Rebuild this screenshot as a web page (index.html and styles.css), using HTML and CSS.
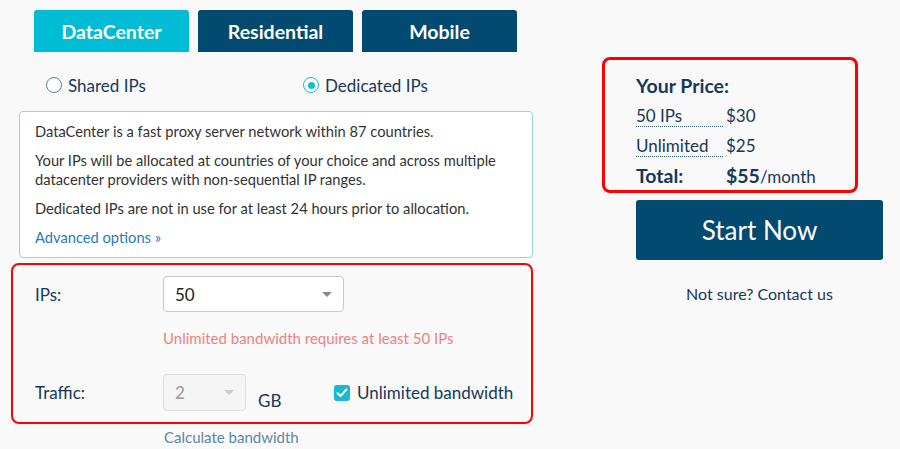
FILE: index.html
```html
<!DOCTYPE html>
<html>
<head>
<meta charset="utf-8">
<link rel="stylesheet" href="styles.css">
</head>
<body>
<div class="page">
  <div class="left">
    <div class="tabs">
      <div class="tab active">DataCenter</div>
      <div class="tab">Residential</div>
      <div class="tab">Mobile</div>
    </div>
    <div class="radios">
      <label class="radio r-shared"><span class="circle"></span>Shared IPs</label>
      <label class="radio r-ded"><span class="circle on"></span>Dedicated IPs</label>
    </div>
    <div class="info">
      <p>DataCenter is a fast proxy server network within 87 countries.</p>
      <p>Your IPs will be allocated at countries of your choice and across multiple datacenter providers with non-sequential IP ranges.</p>
      <p>Dedicated IPs are not in use for at least 24 hours prior to allocation.</p>
      <a class="adv">Advanced options »</a>
    </div>
    <div class="config">
      <div class="row">
        <div class="lbl">IPs:</div>
        <div class="select big"><span>50</span><span class="arrow"></span></div>
      </div>
      <div class="err">Unlimited bandwidth requires at least 50 IPs</div>
      <div class="row row2">
        <div class="lbl">Traffic:</div>
        <div class="select small disabled"><span>2</span><span class="arrow"></span></div>
        <div class="gb">GB</div>
        <label class="check"><span class="box"><svg width="12" height="10" viewBox="0 0 12 10"><path d="M1.5 5.2 L4.5 8 L10.5 1.5" fill="none" stroke="#fff" stroke-width="2" stroke-linecap="round" stroke-linejoin="round"/></svg></span>Unlimited bandwidth</label>
      </div>
    </div>
    <div class="calc">Calculate bandwidth</div>
  </div>
  <div class="right">
    <div class="price">
      <div class="ptitle">Your Price:</div>
      <div class="prow"><span class="pl">50 IPs</span><span>$30</span></div>
      <div class="prow"><span class="pl">Unlimited</span><span>$25</span></div>
      <div class="prow total"><span class="tl">Total:</span><span><b>$55</b>/month</span></div>
    </div>
    <div class="start">Start Now</div>
    <div class="notsure">Not sure? Contact us</div>
  </div>
</div>
</body>
</html>
```
FILE: styles.css
```css
* { box-sizing: border-box; }
body {
  margin: 0;
  background: #f9f9f9;
  font-family: Lato, "Open Sans", sans-serif;
  color: #173858;
}
.page { display: flex; }
.left { width: 545px; }
.tabs {
  display: flex;
  gap: 9px;
  padding-left: 34px;
  margin-top: 10px;
}
.tab {
  width: 155px;
  height: 42px;
  background: #034a70;
  color: #fff;
  font-weight: bold;
  font-size: 19.5px;
  display: flex;
  align-items: center;
  justify-content: center;
  border-radius: 3px 3px 0 0;
}
.tab.active { background: #00bcd4; }
.radios {
  display: flex;
  margin-top: 21px;
  height: 24px;
  align-items: center;
  font-size: 17px;
}
.radio { display: flex; align-items: center; }
.r-shared { margin-left: 46px; width: 257px; }
.circle {
  width: 16px;
  height: 16px;
  border: 1.5px solid #5d7d99;
  border-radius: 50%;
  margin-right: 6px;
  display: flex;
  align-items: center;
  justify-content: center;
  background: #fff;
}
.circle.on { border-color: #1cbad2; }
.circle.on::after {
  content: "";
  width: 7px;
  height: 7px;
  border-radius: 50%;
  background: #1cbad2;
}
.info {
  margin: 14px 0 0 19px;
  width: 514px;
  background: #fff;
  border: 1px solid #8ed8e4;
  border-radius: 4px;
  padding: 10px 15px 10px 15px;
  font-size: 14.7px;
  line-height: 19px;
  color: #333;
}
.info p { margin: 0 0 10px 0; }
.adv { color: #2a7ab8; display: block; }
.config {
  margin: 5px 0 0 11px;
  width: 522px;
  height: 161px;
  border: 2px solid #f00;
  border-radius: 8px;
  padding: 11px 0 0 22px;
}
.row { display: flex; align-items: center; }
.lbl { width: 128px; font-size: 17px; }
.select {
  height: 36px;
  background: #fff;
  border: 1px solid #c9c9c9;
  border-radius: 4px;
  display: flex;
  align-items: center;
  justify-content: space-between;
  padding: 0 11px 0 11px;
  font-size: 17px;
  color: #222;
}
.select.big { width: 181px; }
.select.small { width: 83px; height: 37px; }
.select.disabled { background: #f5f5f5; border-color: #ddd; color: #999; }
.arrow {
  width: 0; height: 0;
  border-left: 5px solid transparent;
  border-right: 5px solid transparent;
  border-top: 5px solid #888;
}
.disabled .arrow { border-top-color: #ccc; }
.err {
  margin: 17px 0 0 128px;
  font-size: 15px;
  line-height: 18px;
  color: #f08080;
}
.row2 { margin-top: 27px; }
.gb { font-size: 17px; margin: 16px 0 0 12px; width: 76px; }
.check { display: flex; align-items: center; font-size: 17px; }
.box {
  width: 16px; height: 16px;
  background: #17b9d2;
  border-radius: 3px;
  margin-right: 7px;
  display: flex; align-items: center; justify-content: center;
}
.calc {
  margin: 4px 0 0 164px;
  font-size: 15px;
  color: #5a88a8;
}
.right { margin-left: 57px; }
.price {
  margin-top: 57px;
  width: 256px;
  height: 136px;
  border: 3px solid #f00;
  border-radius: 8px;
  padding: 11px 0 0 31px;
  font-size: 17px;
}
.ptitle { font-weight: bold; font-size: 19.5px; line-height: 30px; }
.prow { display: flex; line-height: 30px; }
.pl {
  width: 87px;
  margin-right: 3px;
  line-height: 18px;
  height: 20px;
  margin-top: 6px;
  border-bottom: 1px dotted #2a5575;
}
.tl { width: 90px; font-weight: bold; font-size: 19.5px; }
.total b { font-size: 19.5px; }
.start {
  margin: 7px 0 0 34px;
  width: 247px;
  height: 60px;
  background: #034a70;
  color: #fff;
  font-size: 26px;
  border-radius: 3px;
  display: flex;
  align-items: center;
  justify-content: center;
}
.notsure {
  margin: 24px 0 0 34px;
  width: 247px;
  text-align: center;
  font-size: 16px;
}
```
